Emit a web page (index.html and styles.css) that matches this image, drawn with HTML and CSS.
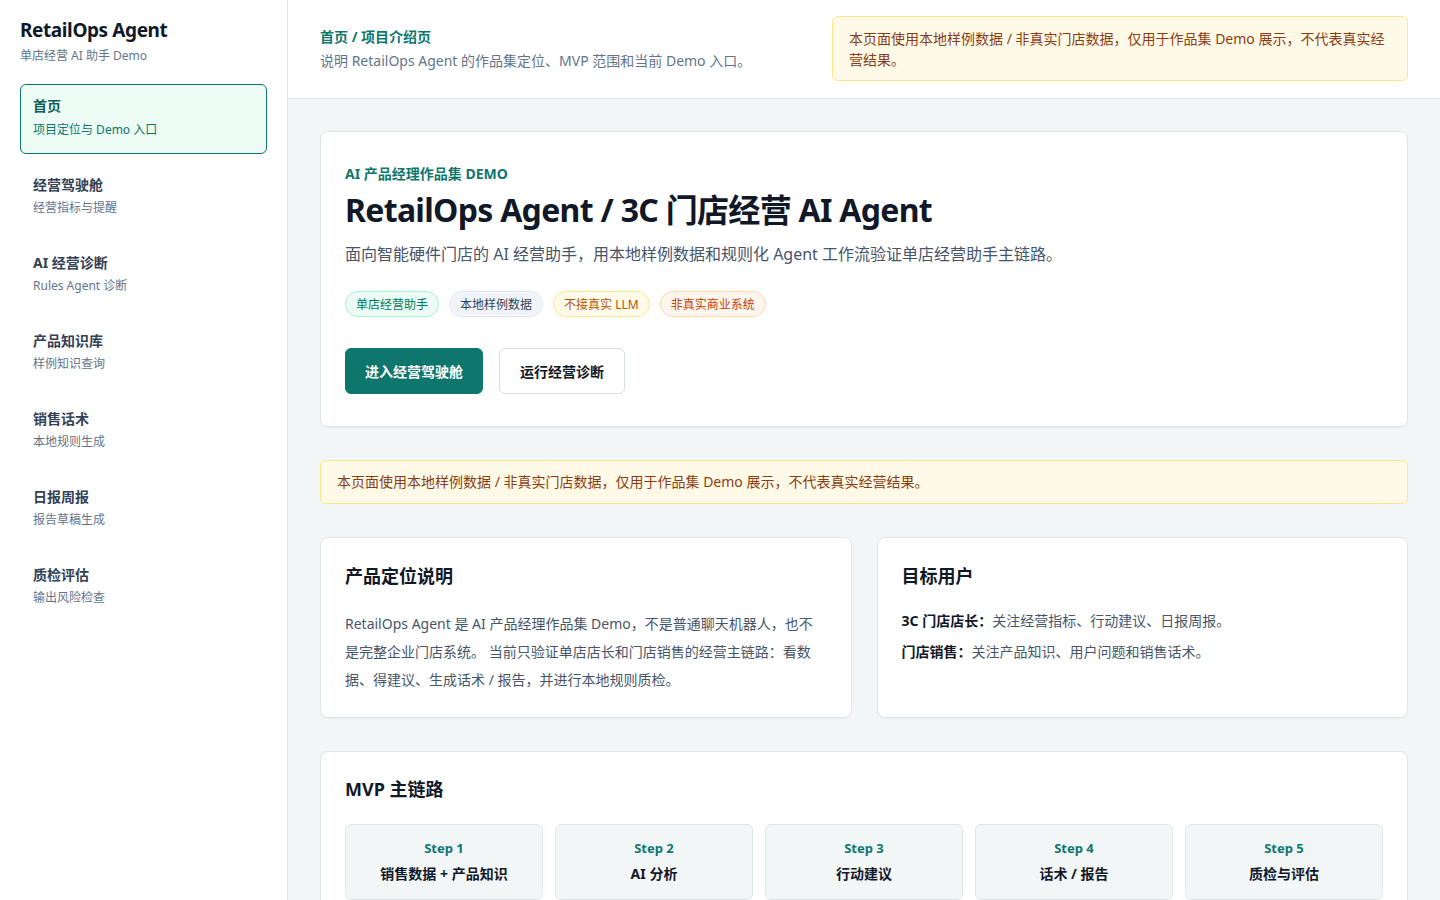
FILE: index.html
```html
<!DOCTYPE html>
<html lang="zh-CN">
<head>
<meta charset="utf-8">
<title>RetailOps Agent - 首页</title>
<link rel="stylesheet" href="styles.css">
</head>
<body>
<div class="app">
  <aside class="sidebar">
    <div class="brand">
      <div class="brand-name">RetailOps Agent</div>
      <div class="brand-sub">单店经营 AI 助手 Demo</div>
    </div>
    <nav class="nav">
      <a class="nav-item active" href="#">
        <span class="nav-title">首页</span>
        <span class="nav-sub">项目定位与 Demo 入口</span>
      </a>
      <a class="nav-item" href="#">
        <span class="nav-title">经营驾驶舱</span>
        <span class="nav-sub">经营指标与提醒</span>
      </a>
      <a class="nav-item" href="#">
        <span class="nav-title">AI 经营诊断</span>
        <span class="nav-sub">Rules Agent 诊断</span>
      </a>
      <a class="nav-item" href="#">
        <span class="nav-title">产品知识库</span>
        <span class="nav-sub">样例知识查询</span>
      </a>
      <a class="nav-item" href="#">
        <span class="nav-title">销售话术</span>
        <span class="nav-sub">本地规则生成</span>
      </a>
      <a class="nav-item" href="#">
        <span class="nav-title">日报周报</span>
        <span class="nav-sub">报告草稿生成</span>
      </a>
      <a class="nav-item" href="#">
        <span class="nav-title">质检评估</span>
        <span class="nav-sub">输出风险检查</span>
      </a>
    </nav>
  </aside>

  <div class="main">
    <header class="topbar">
      <div class="topbar-text">
        <div class="crumb">首页 / 项目介绍页</div>
        <div class="crumb-desc">说明 RetailOps Agent 的作品集定位、MVP 范围和当前 Demo 入口。</div>
      </div>
      <div class="notice notice-top">本页面使用本地样例数据 / 非真实门店数据，仅用于作品集 Demo 展示，不代表真实经营结果。</div>
    </header>

    <main class="content">
      <section class="card hero">
        <div class="eyebrow">AI 产品经理作品集 DEMO</div>
        <h1 class="hero-title">RetailOps Agent / 3C 门店经营 AI Agent</h1>
        <p class="hero-desc">面向智能硬件门店的 AI 经营助手，用本地样例数据和规则化 Agent 工作流验证单店经营助手主链路。</p>
        <div class="tags">
          <span class="tag tag-green">单店经营助手</span>
          <span class="tag tag-gray">本地样例数据</span>
          <span class="tag tag-yellow">不接真实 LLM</span>
          <span class="tag tag-orange">非真实商业系统</span>
        </div>
        <div class="actions">
          <a class="btn btn-primary" href="#">进入经营驾驶舱</a>
          <a class="btn btn-secondary" href="#">运行经营诊断</a>
        </div>
      </section>

      <div class="notice notice-bar">本页面使用本地样例数据 / 非真实门店数据，仅用于作品集 Demo 展示，不代表真实经营结果。</div>

      <div class="two-col">
        <section class="card info">
          <h2 class="card-title">产品定位说明</h2>
          <p class="body-text">RetailOps Agent 是 AI 产品经理作品集 Demo，不是普通聊天机器人，也不是完整企业门店系统。 当前只验证单店店长和门店销售的经营主链路：看数据、得建议、生成话术 / 报告，并进行本地规则质检。</p>
        </section>
        <section class="card info">
          <h2 class="card-title">目标用户</h2>
          <p class="user-line"><strong>3C 门店店长：</strong>关注经营指标、行动建议、日报周报。</p>
          <p class="user-line"><strong>门店销售：</strong>关注产品知识、用户问题和销售话术。</p>
        </section>
      </div>

      <section class="card mvp">
        <h2 class="card-title">MVP 主链路</h2>
        <div class="steps">
          <div class="step"><div class="step-no">Step 1</div><div class="step-name">销售数据 + 产品知识</div></div>
          <div class="step"><div class="step-no">Step 2</div><div class="step-name">AI 分析</div></div>
          <div class="step"><div class="step-no">Step 3</div><div class="step-name">行动建议</div></div>
          <div class="step"><div class="step-no">Step 4</div><div class="step-name">话术 / 报告</div></div>
          <div class="step"><div class="step-no">Step 5</div><div class="step-name">质检与评估</div></div>
        </div>
      </section>
    </main>
  </div>
</div>
</body>
</html>
```

FILE: styles.css
```css
* {
  box-sizing: border-box;
}

html, body {
  margin: 0;
  padding: 0;
  height: 100%;
}

body {
  font-family: "Noto Sans", "Noto Sans CJK SC", sans-serif;
  color: #111827;
  background: #f3f6f7;
  font-size: 14px;
}

.app {
  display: flex;
  min-height: 100vh;
}

/* Sidebar */
.sidebar {
  width: 288px;
  flex-shrink: 0;
  background: #ffffff;
  border-right: 1px solid #dfe6e8;
  padding: 16px 20px;
}

.brand {
  margin-bottom: 18px;
}

.brand-name {
  font-size: 19px;
  font-weight: 700;
  color: #111827;
  line-height: 28px;
  letter-spacing: -0.4px;
}

.brand-sub {
  font-size: 12px;
  color: #64748b;
  line-height: 20px;
  margin-top: 2px;
}

.nav {
  display: flex;
  flex-direction: column;
  gap: 8px;
}

.nav-item {
  display: flex;
  flex-direction: column;
  height: 70px;
  padding: 11px 12px 0 12px;
  border: 1px solid transparent;
  border-radius: 6px;
  text-decoration: none;
}

.nav-item:not(.active) {
  padding-top: 12px;
}

.nav-title {
  font-size: 14px;
  font-weight: 700;
  color: #334155;
  line-height: 20px;
}

.nav-sub {
  font-size: 12px;
  color: #64748b;
  line-height: 20px;
  margin-top: 4px;
}

.nav-item:not(.active) .nav-sub {
  margin-top: 3px;
}

.nav-item.active {
  background: #ecfbf4;
  border-color: #0f766e;
}

.nav-item.active .nav-title {
  color: #0f5e58;
}

.nav-item.active .nav-sub {
  color: #0f766e;
}

/* Main column */
.main {
  flex: 1;
  min-width: 0;
  display: flex;
  flex-direction: column;
}

.topbar {
  background: #ffffff;
  border-bottom: 1px solid #dce4e6;
  height: 99px;
  padding: 16px 32px 0 32px;
  display: flex;
  justify-content: space-between;
  align-items: flex-start;
}

.topbar-text {
  padding-top: 10px;
}

.crumb {
  font-size: 14px;
  font-weight: 700;
  color: #0f766e;
  line-height: 22px;
}

.crumb-desc {
  font-size: 14px;
  color: #64748b;
  line-height: 24px;
  margin-top: 1px;
}

.notice {
  background: #fffae8;
  border: 1px solid #fde68a;
  border-radius: 6px;
  color: #8a3d12;
  font-size: 14px;
}

.notice-top {
  width: 576px;
  padding: 11px 16px 10px 16px;
  line-height: 21px;
}

.content {
  padding: 32px;
  display: flex;
  flex-direction: column;
  gap: 33px;
}

.card {
  background: #ffffff;
  border: 1px solid #dfe6e8;
  border-radius: 8px;
  box-shadow: 0 1px 2px rgba(15, 23, 42, 0.04);
}

/* Hero */
.hero {
  padding: 31px 24px 32px 24px;
}

.eyebrow {
  font-size: 14px;
  font-weight: 700;
  color: #0f766e;
  line-height: 22px;
}

.hero-title {
  margin: 3px 0 0 0;
  font-size: 32px;
  font-weight: 700;
  line-height: 44px;
  letter-spacing: -0.7px;
  color: #111827;
}

.hero-desc {
  margin: 9px 0 0 0;
  font-size: 16px;
  line-height: 26px;
  color: #475569;
}

.tags {
  display: flex;
  gap: 10px;
  margin-top: 24px;
}

.tag {
  display: inline-flex;
  align-items: center;
  height: 26px;
  padding: 0 10px;
  border-radius: 13px;
  font-size: 12px;
  border: 1px solid;
}

.tag-green {
  background: #ecfdf5;
  border-color: #a7f3d0;
  color: #047857;
}

.tag-gray {
  background: #f1f5f9;
  border-color: #e2e8f0;
  color: #334155;
}

.tag-yellow {
  background: #fffbeb;
  border-color: #fde68a;
  color: #b45309;
}

.tag-orange {
  background: #fff7ed;
  border-color: #fed7aa;
  color: #c2410c;
}

.actions {
  display: flex;
  gap: 16px;
  margin-top: 31px;
}

.btn {
  display: inline-flex;
  align-items: center;
  justify-content: center;
  height: 46px;
  padding: 0 19px;
  border-radius: 6px;
  font-size: 14px;
  font-weight: 700;
  text-decoration: none;
}

.btn-primary {
  background: #0f766e;
  color: #ffffff;
  border: 1px solid #0f766e;
}

.btn-secondary {
  background: #ffffff;
  color: #111827;
  border: 1px solid #d7dee2;
  padding: 0 20px;
}

/* Notice strip */
.notice-bar {
  padding: 10px 16px;
  line-height: 22px;
}

/* Two info cards */
.two-col {
  display: grid;
  grid-template-columns: 1fr 1fr;
  gap: 25px;
}

.info {
  padding: 24px 24px 22px 24px;
  min-height: 181px;
}

.card-title {
  margin: 0;
  font-size: 18px;
  font-weight: 700;
  line-height: 28px;
  color: #111827;
}

.body-text {
  margin: 20px 0 0 0;
  font-size: 14px;
  line-height: 28px;
  color: #475569;
}

.user-line {
  margin: 19px 0 0 0;
  font-size: 14px;
  line-height: 23px;
  color: #475569;
}

.user-line + .user-line {
  margin-top: 8px;
}

.user-line strong {
  color: #111827;
  font-weight: 700;
}

/* MVP steps */
.mvp {
  padding: 23px 24px 24px 24px;
}

.steps {
  display: grid;
  grid-template-columns: repeat(5, 1fr);
  gap: 12px;
  margin-top: 21px;
}

.step {
  background: #f3f6f7;
  border: 1px solid #dfe6e8;
  border-radius: 6px;
  padding: 12px 12px 14px 12px;
  text-align: center;
}

.step-no {
  font-size: 13px;
  font-weight: 700;
  color: #0f766e;
  line-height: 22px;
}

.step-name {
  margin-top: 4px;
  font-size: 14px;
  font-weight: 700;
  color: #111827;
  line-height: 22px;
}
```
